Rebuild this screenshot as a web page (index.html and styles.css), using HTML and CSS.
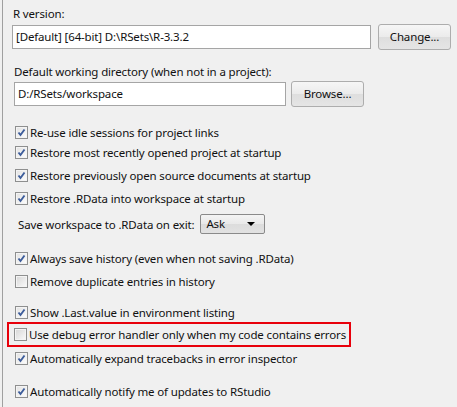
FILE: index.html
```html
<!DOCTYPE html>
<html lang="en">
  <head>
    <meta charset="UTF-8" />
    <title>General Options</title>
    <link rel="stylesheet" href="styles.css">
  </head>
  <body>
    <div class="panel">
      <!-- R version -->
      <div class="label first">R version:</div>
      <div class="field-row">
        <div class="textbox wide">[Default] [64-bit] D:\RSets\R-3.3.2</div>
        <div class="btn change">Change...</div>
      </div>

      <!-- working directory -->
      <div class="label second">Default working directory (when not in a project):</div>
      <div class="field-row row2">
        <div class="textbox dir">D:/RSets/workspace</div>
        <div class="btn browse">Browse...</div>
      </div>

      <div class="opts">
        <div class="opt gap15"><span class="cb on"><svg viewBox="0 0 9 9"><path d="M1.5 4.5 L3.5 7 L7.5 1.5" /></svg></span>Re-use idle sessions for project links</div>
        <div class="opt"><span class="cb on"><svg viewBox="0 0 9 9"><path d="M1.5 4.5 L3.5 7 L7.5 1.5" /></svg></span>Restore most recently opened project at startup</div>
        <div class="opt gap3"><span class="cb on"><svg viewBox="0 0 9 9"><path d="M1.5 4.5 L3.5 7 L7.5 1.5" /></svg></span>Restore previously open source documents at startup</div>
        <div class="opt gap3"><span class="cb on"><svg viewBox="0 0 9 9"><path d="M1.5 4.5 L3.5 7 L7.5 1.5" /></svg></span>Restore .RData into workspace at startup</div>
        <div class="save-row">
          <span>Save workspace to .RData on exit:</span>
          <div class="select">Ask<span class="arrow"></span></div>
        </div>
        <div class="opt gap14"><span class="cb on"><svg viewBox="0 0 9 9"><path d="M1.5 4.5 L3.5 7 L7.5 1.5" /></svg></span>Always save history (even when not saving .RData)</div>
        <div class="opt gap3"><span class="cb"></span>Remove duplicate entries in history</div>
        <div class="opt gap11"><span class="cb on"><svg viewBox="0 0 9 9"><path d="M1.5 4.5 L3.5 7 L7.5 1.5" /></svg></span>Show .Last.value in environment listing</div>
        <div class="highlight">
          <div class="opt"><span class="cb"></span>Use debug error handler only when my code contains errors</div>
        </div>
        <div class="opt gap1"><span class="cb on"><svg viewBox="0 0 9 9"><path d="M1.5 4.5 L3.5 7 L7.5 1.5" /></svg></span>Automatically expand tracebacks in error inspector</div>
        <div class="opt gap13"><span class="cb on"><svg viewBox="0 0 9 9"><path d="M1.5 4.5 L3.5 7 L7.5 1.5" /></svg></span>Automatically notify me of updates to RStudio</div>
      </div>
    </div>
  </body>
</html>
```

FILE: styles.css
```css
* {
  margin: 0;
  padding: 0;
  box-sizing: border-box;
}

body {
  font-family: "Noto Sans", "Open Sans", sans-serif;
  font-size: 11.5px;
  letter-spacing: -0.15px;
  color: #111;
  background-color: #f0f0f0;
  width: 457px;
  height: 407px;
  overflow: hidden;
}

.panel {
  margin-left: 2px;
  height: 407px;
  border-left: 1px solid #a0a0a0;
  padding-left: 9px;
  background-color: #f0f0f0;
}

.label {
  line-height: 16px;
  padding-left: 1px;
}

.label.first {
  padding-top: 6px;
}

.label.second {
  margin-top: 14px;
  padding-left: 2px;
}

.field-row {
  display: flex;
  align-items: center;
  margin-top: 2px;
  height: 26px;
}

.row2 {
  margin-top: 1px;
  padding-left: 2px;
}

.textbox {
  height: 24px;
  line-height: 22px;
  background-color: #fff;
  border: 1px solid #a5a5a5;
  padding-left: 3px;
  white-space: nowrap;
}

.textbox.wide {
  width: 359px;
}

.textbox.dir {
  width: 272px;
}

.btn {
  height: 26px;
  line-height: 24px;
  text-align: center;
  border: 1px solid #adadad;
  border-radius: 3px;
  background: linear-gradient(#f6f6f6, #ebebeb 50%, #dedede 51%, #e5e5e5);
}

.btn.change {
  width: 73px;
  margin-left: 7px;
}

.btn.browse {
  width: 73px;
  margin-left: 5px;
}

.opts {
  padding-left: 3px;
}

.opt {
  display: flex;
  align-items: center;
  height: 20px;
  white-space: nowrap;
}

.gap1 { margin-top: 1px; }
.gap3 { margin-top: 3px; }
.gap11 { margin-top: 11px; }
.gap13 { margin-top: 13px; }
.gap14 { margin-top: 14px; }
.gap15 { margin-top: 15px; }

.cb {
  flex-shrink: 0;
  width: 13px;
  height: 13px;
  margin-right: 2px;
  border: 1px solid #8e8f8f;
  background: linear-gradient(135deg, #d6d6d6, #fbfbfb);
  box-shadow: inset 0 0 0 1px #f4f4f4;
  display: flex;
  align-items: center;
  justify-content: center;
}

.cb.on {
  background: linear-gradient(135deg, #e2e2e2, #fdfdfd);
}

.cb svg {
  width: 9px;
  height: 9px;
}

.cb svg path {
  fill: none;
  stroke: #3d5d9b;
  stroke-width: 1.9;
}

.save-row {
  display: flex;
  align-items: center;
  height: 20px;
  margin-top: 6px;
  padding-left: 3px;
}

.select {
  position: relative;
  flex-shrink: 0;
  width: 65px;
  height: 20px;
  line-height: 18px;
  margin-left: 6px;
  padding-left: 5px;
  border: 1px solid #8a8a8a;
  border-radius: 2px;
  background: linear-gradient(#f4f4f4, #e9e9e9 50%, #dcdcdc 51%, #e2e2e2);
}

.arrow {
  position: absolute;
  right: 9px;
  top: 7px;
  border-left: 4px solid transparent;
  border-right: 4px solid transparent;
  border-top: 4px solid #000;
}

.highlight {
  width: 344px;
  margin-left: -8px;
  padding-left: 5px;
  padding-bottom: 1px;
  border: 2px solid #e8000b;
}
```
